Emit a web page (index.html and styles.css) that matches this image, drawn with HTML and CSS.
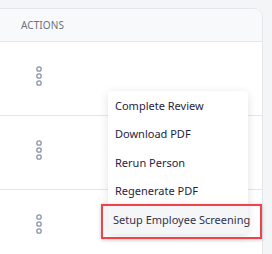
FILE: index.html
```html
<!DOCTYPE html>
<html lang="en">
<head>
    <meta charset="UTF-8">
    <title>Actions</title>
    <link rel="stylesheet" href="styles.css">
</head>
<body>
    <div class="card">
        <div class="table-head">ACTIONS</div>
        <div class="table-row">
            <svg class="kebab" width="8" height="20" viewBox="0 0 8 20"><circle cx="4" cy="3" r="2.2"/><circle cx="4" cy="10" r="2.2"/><circle cx="4" cy="17" r="2.2"/></svg>
        </div>
        <div class="table-row">
            <svg class="kebab" width="8" height="20" viewBox="0 0 8 20"><circle cx="4" cy="3" r="2.2"/><circle cx="4" cy="10" r="2.2"/><circle cx="4" cy="17" r="2.2"/></svg>
        </div>
        <div class="table-row last">
            <svg class="kebab" width="8" height="20" viewBox="0 0 8 20"><circle cx="4" cy="3" r="2.2"/><circle cx="4" cy="10" r="2.2"/><circle cx="4" cy="17" r="2.2"/></svg>
        </div>
    </div>

    <ul class="menu">
        <li>Complete Review</li>
        <li>Download PDF</li>
        <li>Rerun Person</li>
        <li>Regenerate PDF</li>
        <li class="active">Setup Employee Screening</li>
    </ul>
    <div class="highlight"></div>
</body>
</html>
```

FILE: styles.css
```css
:root {
    --page-bg: #f4f5f7;
    --head-bg: #f8f9fb;
    --line: #e4e6eb;
    --text: #1f1e3d;
    --muted: #6b7280;
    --icon: #8b93a6;
    --red: #ef4249;
}

html {
    overflow: hidden;
}

body {
    margin: 0;
    padding: 8px 8px 0 0;
    background-color: var(--page-bg);
    font-family: "Noto Sans", "Open Sans", sans-serif;
    height: 254px;
    box-sizing: border-box;
    overflow: hidden;
}

.card {
    background-color: #fff;
    border: 1px solid var(--line);
    border-left: none;
    border-bottom: none;
    border-radius: 0 9px 0 0;
    width: 263px;
    height: 246px;
    box-sizing: border-box;
    overflow: hidden;
}

.table-head {
    height: 33px;
    background-color: var(--head-bg);
    border-bottom: 1px solid var(--line);
    box-sizing: border-box;
    padding-left: 21px;
    display: flex;
    align-items: center;
    font-size: 10px;
    color: var(--muted);
    letter-spacing: 0.1px;
}

.table-row {
    height: 74px;
    border-bottom: 1px solid var(--line);
    box-sizing: border-box;
    display: flex;
    align-items: center;
    padding-left: 35px;
    padding-bottom: 6px;
}

.table-row.last {
    border-bottom: none;
}

.kebab circle {
    fill: none;
    stroke: var(--icon);
    stroke-width: 1.3;
}

.menu {
    position: absolute;
    left: 108px;
    top: 91px;
    width: 140px;
    margin: 0;
    padding: 0;
    list-style: none;
    background-color: #fff;
    border-radius: 4px;
    box-shadow: 0 2px 10px rgba(0, 0, 0, 0.12);
}

.menu li {
    height: 28.5px;
    display: flex;
    align-items: center;
    padding-left: 7px;
    font-size: 11px;
    color: var(--text);
    white-space: nowrap;
}

.menu li.active {
    background-color: #f5f6f8;
    padding-left: 5px;
    color: #33334a;
}

.highlight {
    position: absolute;
    left: 101px;
    top: 204px;
    width: 161px;
    height: 35px;
    border: 2.5px solid var(--red);
    box-sizing: border-box;
    box-shadow: 0 1px 4px rgba(0, 0, 0, 0.2);
}
```
